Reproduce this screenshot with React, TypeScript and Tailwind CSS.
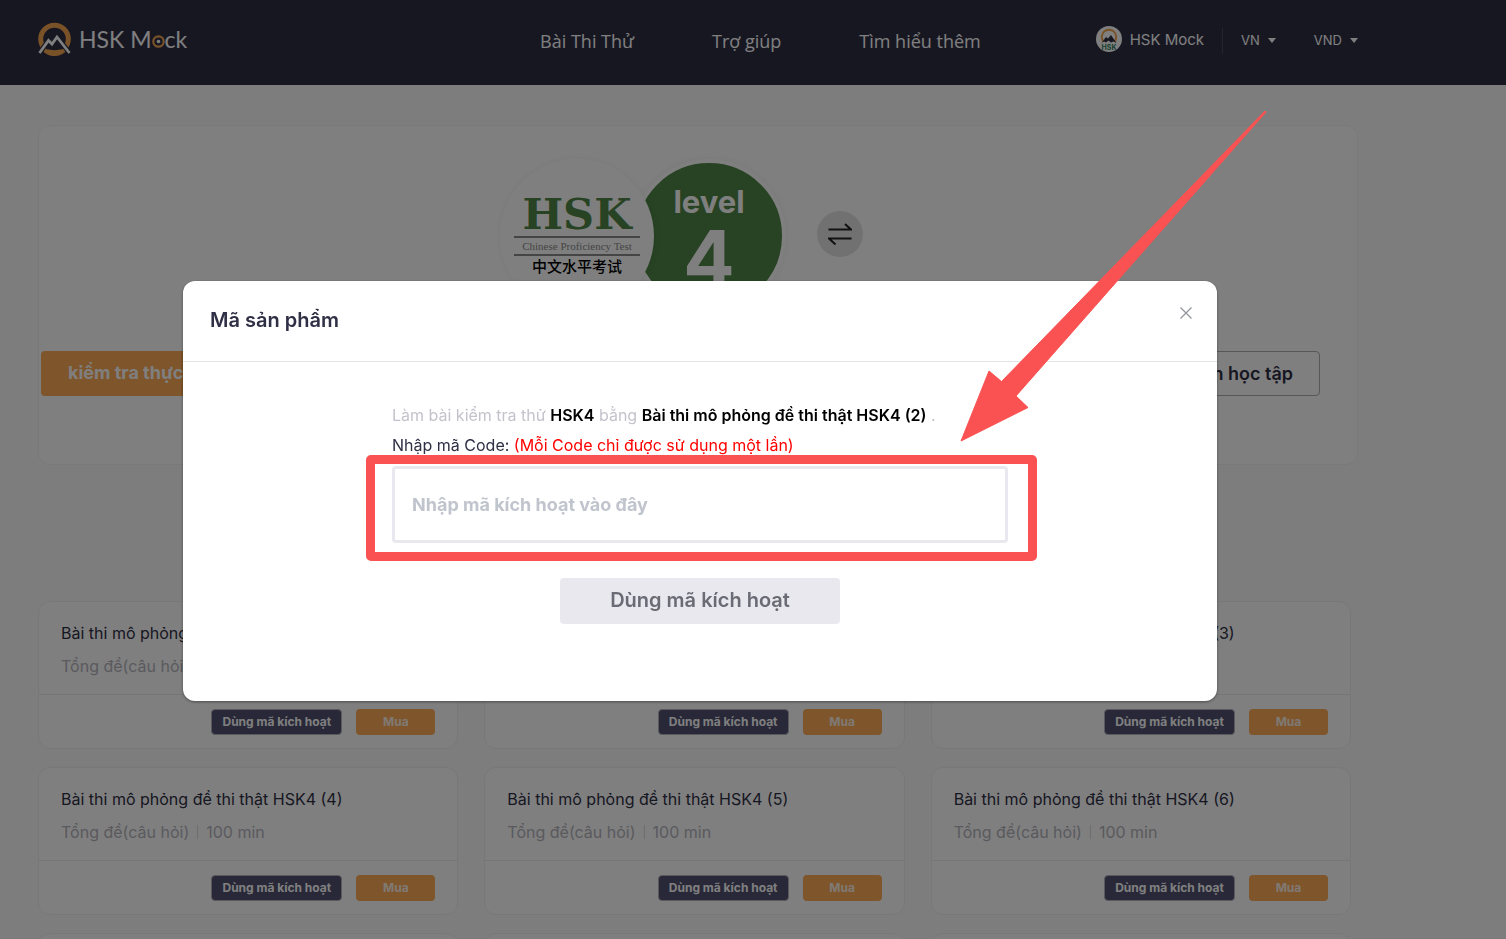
const navItems = ["Bài Thi Thử", "Trợ giúp", "Tìm hiểu thêm"];
const exams = [1, 2, 3, 4, 5, 6, 7, 8, 9];

function LogoMark() {
  return (
    <svg width="33" height="34" viewBox="0 0 33 34" fill="none" aria-hidden="true" className="mb-1">
      <circle cx="16.5" cy="17" r="13.8" stroke="#f4a44f" strokeWidth="5" />
      <path d="M-1 31 10.500 18.500 14 21.500 19 15 34 31 30 33 26 27.500H7L3 33Z" fill="#2f2f45" />
      <path d="M7.500 26C12 32 21 32 25.500 26L29 28C23 36 10 36 4.500 28.500Z" fill="#f4a44f" />
      <path d="M1.500 31 10.500 18.500 14 22 19 15 31.500 31" stroke="#2f2f45" strokeWidth="5" />
      <path d="M1.500 31 10.500 18.500 14 22 19 15 31.500 31" stroke="#fff" strokeWidth="2.800" />
    </svg>
  );
}

function Caret() {
  return (
    <svg width="8" height="5" viewBox="0 0 8 5" aria-hidden="true">
      <path d="M0 0h8L4 5Z" fill="#fff" />
    </svg>
  );
}

function Avatar() {
  return (
    <svg width="26" height="26" viewBox="0 0 26 26" aria-hidden="true" className="mb-1">
      <circle cx="13" cy="13" r="13" fill="#fff" />
      <path d="M7.500 15.500a7.200 7.200 0 1 1 11 0" fill="none" stroke="#f4a44f" strokeWidth="2" />
      <path d="M5.500 17 10 11 12 12.500 15 9 20.500 17 17.500 15.500 15 16.500 12.500 14.500 10 16.500 8 15.500Z" fill="#2f2f45" />
      <text x="13" y="24" textAnchor="middle" fontSize="7" fontWeight="700" fontFamily="Inter, sans-serif" fill="#2f8060">
        HSK
      </text>
    </svg>
  );
}

function Header() {
  return (
    <header className="bg-[#2f2f45] text-white">
      <div className="flex h-[85px] max-w-[1396px] items-center justify-between px-[38px] pb-1">
        <a href="#" className="flex items-center gap-2" aria-label="HSK Mock">
          <LogoMark />
          <span className="flex items-baseline pb-1 font-[Lato,sans-serif] text-[23px] leading-7">
            HSK&nbsp;M
            <svg width="13" height="13" viewBox="0 0 13 13" aria-hidden="true">
              <circle cx="6.5" cy="6.5" r="5.200" fill="none" stroke="#f4a44f" strokeWidth="2.200" />
              <circle cx="6.5" cy="6.5" r="1.800" fill="#fff" />
            </svg>
            ck
          </span>
        </a>
        <nav className="ml-[238px] flex gap-[78px] font-['Open_Sans',sans-serif] text-lg">
          {navItems.map((item) => (
            <a key={item} href="#">{item}</a>
          ))}
        </nav>
        <div className="flex items-center">
          <a href="#" className="flex items-center gap-2 text-[15px]">
            <Avatar />
            HSK Mock
          </a>
          <span className="mx-[18px] h-[26px] w-px bg-[#48485e]" />
          <button className="flex items-center gap-2 text-[13px]">VN <Caret /></button>
          <button className="ml-[38px] flex items-center gap-2 text-[13px]">VND <Caret /></button>
        </div>
      </div>
    </header>
  );
}

function LevelBadge() {
  return (
    <div className="flex items-center">
      <div className="relative z-10 flex size-[154px] flex-col items-center rounded-full bg-white pt-[35px] shadow-[0_0_8px_rgba(0,0,0,0.06)]">
        <span className="font-['DejaVu_Serif',serif] text-[43px] leading-10 font-bold text-[#4f8646]">HSK</span>
        <span className="mt-0.5 w-[126px] border-y-2 border-[#8a8a8a] text-center font-['Liberation_Serif',serif] text-[11px] leading-4 text-[#8a8a8a]">
          Chinese Proficiency Test
        </span>
        <span className="font-['Noto_Sans_CJK_SC',sans-serif] text-[15px] leading-5 font-medium text-black">中文水平考试</span>
      </div>
      <div className="-ml-[22px] flex size-[154px] flex-col items-center rounded-full border-4 border-white bg-[#4f8646] pt-5 font-bold text-white shadow-[0_0_8px_rgba(0,0,0,0.06)]">
        <span className="text-[31px] leading-[38px]">level</span>
        <span className="text-[76px] leading-[72px]">4</span>
      </div>
    </div>
  );
}

function Hero() {
  return (
    <section className="mt-10 rounded-xl border border-[#f2f2f2] bg-white">
      <div className="flex items-center pt-[33px] pl-[461px]">
        <LevelBadge />
        <button aria-label="Đổi cấp độ" className="mb-1 ml-[31px] flex size-[46px] items-center justify-center rounded-full bg-[#e2e2e2]">
          <svg width="24" height="22" viewBox="0 0 24 22" fill="none" stroke="#222" strokeWidth="2" aria-hidden="true">
            <path d="M0.500 6.500H23L17 1M23.500 15.500H1L7.500 21.500" />
          </svg>
        </button>
      </div>
      <div className="flex justify-between pt-[38px] pr-[37px] pb-[68px] pl-0.5 text-lg">
        <button className="h-[45px] rounded bg-[#ffaa56] px-[27px] pb-0.5 font-bold text-white">kiểm tra thực tế</button>
        <button className="h-[45px] rounded border border-[#b0b0b0] bg-white px-[26px] font-semibold text-[#2f2f45]">Luyện học tập</button>
      </div>
    </section>
  );
}

function ExamCard({ index }: { index: number }) {
  return (
    <article className="rounded-xl border border-[#f0f0f0] bg-white">
      <div className="h-[93px] border-b border-[#ececec] px-[22px] pt-[19px]">
        <h3 className="text-base leading-6 text-[#2f2f45]">Bài thi mô phỏng đề thi thật HSK4 ({index})</h3>
        <p className="mt-[9px] flex items-center gap-2 text-base leading-6 text-[#b4b4bc]">
          Tổng đề(câu hỏi)
          <span className="h-3.5 w-px bg-[#dcdce2]" />
          100 min
        </p>
      </div>
      <div className="flex justify-end gap-3.5 px-[22px] pt-3.5 pb-[13px] text-xs font-bold text-white">
        <button className="h-[26px] w-[131px] rounded border border-[#b4b4bc] bg-[#505170]">Dùng mã kích hoạt</button>
        <button className="h-[26px] w-[79px] rounded bg-[#ffaa56] text-[#fff3e6]">Mua</button>
      </div>
    </article>
  );
}

function CodeDialog() {
  return (
    <div className="fixed inset-0 z-20 bg-black/50">
      <div className="flex max-w-[1400px] justify-center px-6 pt-[281px]">
        <div role="dialog" aria-labelledby="dialog-title" className="relative w-full max-w-[1034px] rounded-xl bg-white shadow-[0_1px_3px_rgba(0,0,0,0.4)]">
          <div className="flex h-[81px] items-center justify-between border-b border-[#e4e4e6] pr-[25px] pl-[27px]">
            <h2 id="dialog-title" className="pb-0.5 text-xl font-semibold text-[#2f2f45]">Mã sản phẩm</h2>
            <button aria-label="Đóng" className="mb-4">
              <svg width="12" height="12" viewBox="0 0 12 12" stroke="#909399" strokeWidth="1.200" aria-hidden="true">
                <path d="M0.500 0.500 11.500 11.500M11.500 0.500 0.500 11.500" />
              </svg>
            </button>
          </div>
          <div className="mx-auto flex max-w-[616px] flex-col pt-[38px] pb-[77px] text-base leading-[30px]">
            <p className="text-[#c3c3cc]">
              Làm bài kiểm tra thử <b className="font-semibold text-black">HSK4</b> bằng{" "}
              <b className="font-semibold text-black">Bài thi mô phỏng đề thi thật HSK4 (2)</b> .
            </p>
            <label htmlFor="code" className="text-[#2f2f45]">
              Nhập mã Code: <span className="text-[#ff0000]">(Mỗi Code chỉ được sử dụng một lần)</span>
            </label>
            <div className="relative mt-1.5">
              <input
                id="code"
                placeholder="Nhập mã kích hoạt vào đây"
                className="block h-[77px] w-full rounded border-3 border-[#e8e8ee] px-[17px] text-lg font-bold text-[#2f2f45] placeholder:text-[#c0c4cc]"
              />
              <div className="pointer-events-none absolute -top-[11px] -right-[29px] -bottom-[18px] -left-[26px] rounded-[5px] border-9 border-[#fa5252]" />
            </div>
            <button className="mx-auto mt-[35px] h-[46px] w-[280px] rounded bg-[#e8e8ee] pb-0.5 text-xl font-semibold text-[#6b6b75]">
              Dùng mã kích hoạt
            </button>
          </div>
          <svg width="308" height="332" viewBox="0 0 308 332" className="pointer-events-none absolute -top-[171px] left-[777px]" aria-hidden="true">
            <path d="M305 1 41.500 271.500 29 261 1 331 68 297.500 56 286 306 2Z" fill="#fa5252" stroke="#fa5252" strokeLinejoin="round" />
          </svg>
        </div>
      </div>
    </div>
  );
}

export default function App() {
  return (
    <div className="h-screen overflow-hidden bg-[#fbfbfb] font-[Inter,sans-serif]">
      <Header />
      <main className="max-w-[1396px] px-[38px]">
        <Hero />
        <div className="mt-[136px] grid max-w-[1313px] grid-cols-3 gap-x-[26px] gap-y-[18px]">
          {exams.map((n) => (
            <ExamCard key={n} index={n} />
          ))}
        </div>
      </main>
      <CodeDialog />
    </div>
  );
}
